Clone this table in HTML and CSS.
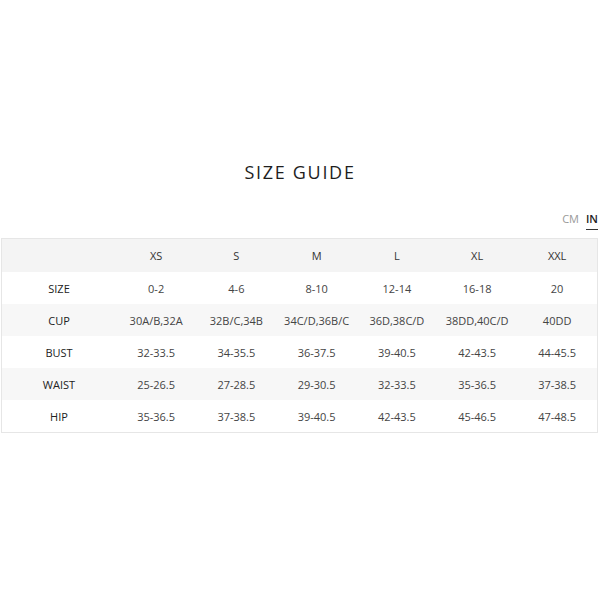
FILE: index.html
```html
<!DOCTYPE html>
<html>
<head>
<meta charset="utf-8">
<link rel="stylesheet" href="styles.css">
</head>
<body>
<div class="page">
  <h1 class="title">SIZE GUIDE</h1>
  <div class="units">
    <span class="unit">CM</span>
    <span class="unit active">IN</span>
  </div>
  <table class="chart">
    <thead>
      <tr><th class="label"></th><th>XS</th><th>S</th><th>M</th><th>L</th><th>XL</th><th>XXL</th></tr>
    </thead>
    <tbody>
      <tr><td class="label">SIZE</td><td>0-2</td><td>4-6</td><td>8-10</td><td>12-14</td><td>16-18</td><td>20</td></tr>
      <tr class="alt"><td class="label">CUP</td><td>30A/B,32A</td><td>32B/C,34B</td><td>34C/D,36B/C</td><td>36D,38C/D</td><td>38DD,40C/D</td><td>40DD</td></tr>
      <tr><td class="label">BUST</td><td>32-33.5</td><td>34-35.5</td><td>36-37.5</td><td>39-40.5</td><td>42-43.5</td><td>44-45.5</td></tr>
      <tr class="alt"><td class="label">WAIST</td><td>25-26.5</td><td>27-28.5</td><td>29-30.5</td><td>32-33.5</td><td>35-36.5</td><td>37-38.5</td></tr>
      <tr><td class="label">HIP</td><td>35-36.5</td><td>37-38.5</td><td>39-40.5</td><td>42-43.5</td><td>45-46.5</td><td>47-48.5</td></tr>
    </tbody>
  </table>
</div>
</body>
</html>
```
FILE: styles.css
```css
html, body {
  margin: 0;
  padding: 0;
  background: #ffffff;
}
body {
  font-family: "Open Sans", "Liberation Sans", sans-serif;
  color: #333333;
}
.page {
  width: 600px;
  height: 600px;
  padding-top: 158px;
  box-sizing: border-box;
}
.title {
  margin: 0;
  text-align: center;
  font-size: 18px;
  font-weight: 500;
  letter-spacing: 1.7px;
  line-height: 28px;
  color: #1e1e1e;
}
.units {
  display: flex;
  justify-content: flex-end;
  gap: 7px;
  margin-top: 26px;
  padding-right: 2px;
  height: 26px;
  align-items: flex-start;
}
.unit {
  font-size: 11px;
  line-height: 14px;
  color: #999999;
  padding-bottom: 3px;
}
.unit.active {
  color: #222222;
  font-weight: 600;
  border-bottom: 1.5px solid #333333;
}
.chart {
  margin-left: 1px;
  width: 597px;
  border-collapse: collapse;
  border: 1px solid #e6e6e6;
  table-layout: fixed;
  font-size: 11px;
}
.chart th, .chart td {
  text-align: center;
  font-weight: 400;
  padding: 0;
  height: 32px;
}
.chart thead tr {
  background: #f4f4f4;
}
.chart thead th {
  height: 33px;
}
.chart .label {
  width: 114px;
  color: #222222;
}
.chart tr.alt {
  background: #f7f7f7;
}
.chart td {
  color: #444444;
}
```
